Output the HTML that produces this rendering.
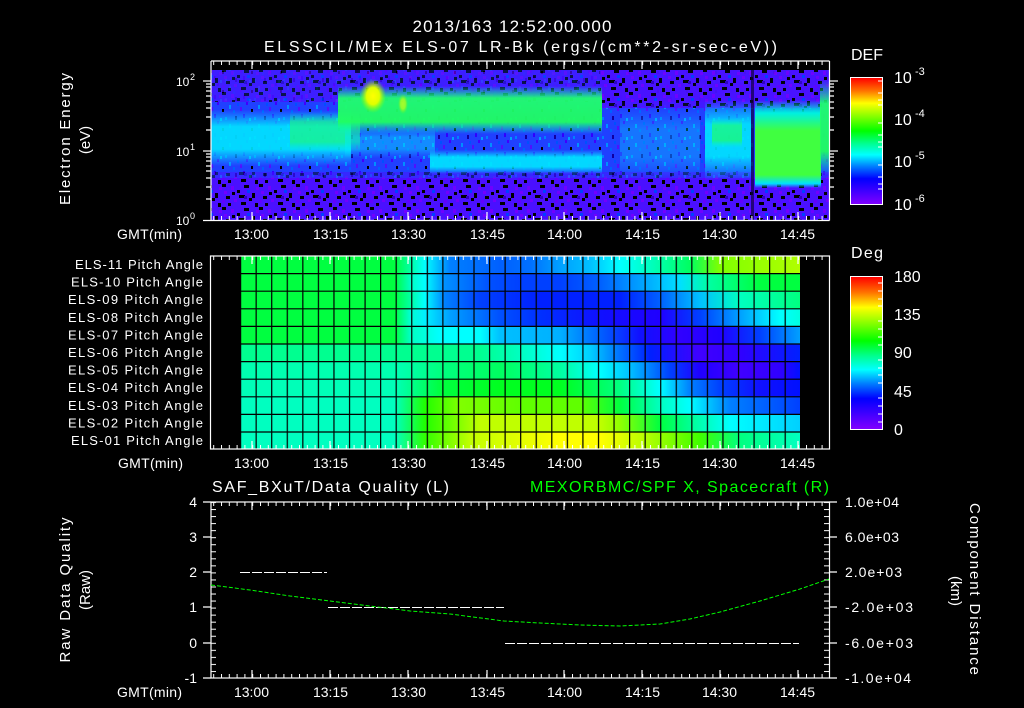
<!DOCTYPE html>
<html><head><meta charset="utf-8">
<style>
html,body{margin:0;padding:0;background:#000;width:1024px;height:708px;overflow:hidden;position:relative}
.pa{position:absolute;left:240px;width:560px;height:17.6px}
.cb{position:absolute;left:850px;width:33px;background:linear-gradient(to bottom,#ff0000 0%,#ff7000 10%,#ffff00 20%,#80ff00 31%,#00ff00 42%,#00ff90 52%,#00ffff 61%,#0080ff 70%,#0000ff 80%,#4000ff 90%,#8000ff 100%);box-sizing:border-box;border:1px solid #fff}
svg{position:absolute;left:0;top:0}
text{font-family:"Liberation Sans",sans-serif;fill:#fff}
</style></head><body>
<div class="pa" style="top:256px;background:linear-gradient(to right,#00ff40 0px,#00ff40 155px,#00ffff 185px,#0080ff 210px,#0060ff 260px,#0070ff 290px,#00a0ff 320px,#00c0ff 350px,#00ffff 380px,#00ffc0 410px,#00ff60 450px,#80ff00 480px,#b0ff00 560px)"></div>
<div class="pa" style="top:273.6px;background:linear-gradient(to right,#00ff40 0px,#00ff40 155px,#00ffc0 170px,#00ffff 185px,#0090ff 205px,#0050ff 250px,#0040ff 280px,#0040ff 320px,#0060ff 360px,#00a0ff 400px,#00e0ff 440px,#00ffa0 470px,#00ff40 520px,#00ff40 560px)"></div>
<div class="pa" style="top:291.2px;background:linear-gradient(to right,#00ff40 0px,#00ff40 155px,#00ffff 185px,#0080ff 205px,#0040ff 240px,#0020ff 300px,#0020ff 380px,#0060ff 420px,#00c0ff 460px,#00ffc0 500px,#00ff80 560px)"></div>
<div class="pa" style="top:308.8px;background:linear-gradient(to right,#00ff40 0px,#00ff40 155px,#00ffd0 170px,#00f0ff 185px,#00a0ff 210px,#0050ff 260px,#0030ff 300px,#1010ff 360px,#2000ff 420px,#0040ff 460px,#00a0ff 500px,#00ffff 540px,#00ffe0 560px)"></div>
<div class="pa" style="top:326.4px;background:linear-gradient(to right,#00ff40 0px,#00ff40 155px,#00ffc0 170px,#00ffff 200px,#00ffff 240px,#00c0ff 260px,#00b0ff 320px,#0060ff 360px,#1010ff 400px,#3000ff 440px,#2000ff 480px,#0040ff 520px,#00a0ff 560px)"></div>
<div class="pa" style="top:344px;background:linear-gradient(to right,#00ff90 0px,#00ff90 240px,#00ffc0 280px,#00ffff 320px,#00d0ff 350px,#0070ff 380px,#0020ff 410px,#4000ff 460px,#3000ff 500px,#0020ff 560px)"></div>
<div class="pa" style="top:361.6px;background:linear-gradient(to right,#00ffb0 0px,#00ffb0 160px,#00ff80 200px,#00ff60 260px,#00ffa0 320px,#00ffff 360px,#00c0ff 390px,#0040ff 430px,#2000ff 460px,#4000ff 500px,#3000ff 540px,#0010ff 560px)"></div>
<div class="pa" style="top:379.2px;background:linear-gradient(to right,#00ffb8 0px,#00ffb8 155px,#00ff40 200px,#00ff20 260px,#00ff20 320px,#00ff80 380px,#00ffff 420px,#0080ff 450px,#0040ff 480px,#1010ff 520px,#0010ff 560px)"></div>
<div class="pa" style="top:396.8px;background:linear-gradient(to right,#00ffc0 0px,#00ffc0 155px,#20ff00 185px,#80ff00 220px,#60ff00 280px,#60ff00 340px,#00ff40 380px,#00ffc0 420px,#00ffff 450px,#0080ff 490px,#0040ff 560px)"></div>
<div class="pa" style="top:414.4px;background:linear-gradient(to right,#00ffc0 0px,#00ffc0 155px,#20ff00 185px,#c0ff00 240px,#c0ff00 360px,#90ff00 380px,#00ff40 420px,#00ffb0 460px,#00ffff 490px,#00d0ff 560px)"></div>
<div class="pa" style="top:432px;height:17px;background:linear-gradient(to right,#00ffc0 0px,#00ffc0 155px,#30ff00 185px,#c0ff00 230px,#ffff00 320px,#ffff00 360px,#c0ff00 400px,#40ff00 460px,#00ff80 500px,#00ffc0 560px)"></div>
<div class="cb" style="top:77px;height:128px"></div>
<div class="cb" style="top:276px;height:154px"></div>

<svg width="1024" height="708" viewBox="0 0 1024 708">
<defs>
<clipPath id="cd"><rect x="211" y="70" width="618" height="150"/></clipPath>
<linearGradient id="gc" x1="0" y1="0" x2="0" y2="1"><stop offset="0" stop-color="#00e8ff" stop-opacity="0"/><stop offset="0.3" stop-color="#00e8ff" stop-opacity="0.9"/><stop offset="0.7" stop-color="#00e8ff" stop-opacity="0.9"/><stop offset="1" stop-color="#00e8ff" stop-opacity="0"/></linearGradient>
<linearGradient id="gg" x1="0" y1="0" x2="0" y2="1"><stop offset="0" stop-color="#00ffb0" stop-opacity="0"/><stop offset="0.25" stop-color="#20ff70" stop-opacity="0.95"/><stop offset="0.75" stop-color="#20ff60" stop-opacity="0.95"/><stop offset="1" stop-color="#00ffc0" stop-opacity="0"/></linearGradient>
<linearGradient id="gb" x1="0" y1="0" x2="0" y2="1"><stop offset="0" stop-color="#00ffd0" stop-opacity="0"/><stop offset="0.15" stop-color="#00f0e0"/><stop offset="0.35" stop-color="#40ff40"/><stop offset="0.85" stop-color="#40ff40"/><stop offset="0.95" stop-color="#00e0ff"/><stop offset="1" stop-color="#00e0ff" stop-opacity="0"/></linearGradient>
<radialGradient id="gy"><stop offset="0" stop-color="#ffff00"/><stop offset="0.5" stop-color="#e0ff00"/><stop offset="1" stop-color="#80ff00" stop-opacity="0"/></radialGradient>
<pattern id="nz" width="37" height="23" patternUnits="userSpaceOnUse">
<rect width="37" height="23" fill="#4a10ff"/>
<rect x="0" y="0" width="4" height="3" fill="#000"/><rect x="9" y="2" width="3" height="4" fill="#7000ff"/>
<rect x="15" y="6" width="3" height="3" fill="#000"/><rect x="22" y="1" width="5" height="3" fill="#000"/>
<rect x="30" y="9" width="3" height="5" fill="#000"/><rect x="4" y="12" width="4" height="3" fill="#000"/>
<rect x="12" y="15" width="3" height="3" fill="#7000ff"/><rect x="19" y="18" width="5" height="3" fill="#000"/>
<rect x="27" y="14" width="3" height="3" fill="#000"/><rect x="33" y="19" width="3" height="4" fill="#000"/>
<rect x="6" y="19" width="3" height="3" fill="#000"/><rect x="25" y="6" width="3" height="3" fill="#0040ff"/>
<rect x="2" y="7" width="3" height="3" fill="#7000ff"/><rect x="17" y="11" width="6" height="3" fill="#000"/>
<rect x="34" y="3" width="3" height="3" fill="#7000ff"/><rect x="10" y="8" width="3" height="3" fill="#000"/>
<rect x="22" y="12" width="3" height="3" fill="#3000c0"/><rect x="0" y="16" width="3" height="3" fill="#6000ff"/>
</pattern>
<pattern id="nz2" width="29" height="19" patternUnits="userSpaceOnUse">
<rect width="29" height="19" fill="#2040ff"/>
<rect x="3" y="2" width="2" height="4" fill="#1000a0"/><rect x="14" y="7" width="2" height="3" fill="#4000ff"/>
<rect x="22" y="3" width="2" height="3" fill="#0080ff"/><rect x="8" y="12" width="2" height="4" fill="#5010ff"/>
<rect x="19" y="14" width="2" height="3" fill="#000"/><rect x="26" y="10" width="2" height="4" fill="#0090ff"/>
<rect x="1" y="15" width="2" height="3" fill="#0060ff"/><rect x="11" y="0" width="2" height="4" fill="#3000ff"/>
<rect x="17" y="4" width="2" height="3" fill="#00a0ff"/><rect x="5" y="8" width="2" height="3" fill="#0050ff"/>
</pattern>
<pattern id="tx" x="213.2" width="7.8" height="1" patternUnits="userSpaceOnUse"><rect width="1" height="1" fill="#fff"/></pattern>
<pattern id="ty" y="502" width="1" height="7.04" patternUnits="userSpaceOnUse"><rect width="1" height="1" fill="#fff"/></pattern>
<pattern id="gv" x="240" width="15.56" height="1" patternUnits="userSpaceOnUse"><rect width="1.2" height="1" fill="#000"/></pattern>
</defs>

<text x="512" y="32" font-size="17" text-anchor="middle" textLength="199">2013/163 12:52:00.000</text>
<text x="264" y="52" font-size="16" textLength="513">ELSSCIL/MEx ELS-07 LR-Bk  (ergs/(cm**2-sr-sec-eV))</text>

<g clip-path="url(#cd)">
<rect x="211" y="70" width="618" height="150" fill="url(#nz2)"/>
<rect x="211" y="70" width="618" height="32" fill="url(#nz)" opacity="0.7"/>
<rect x="600" y="70" width="229" height="38" fill="url(#nz)" opacity="0.85"/>
<rect x="211" y="178" width="618" height="42" fill="url(#nz)"/>
<rect x="211" y="172" width="618" height="8" fill="url(#nz)" opacity="0.5"/>
<rect x="211" y="110" width="140" height="56" fill="url(#gc)"/>
<rect x="290" y="112" width="70" height="40" fill="url(#gg)" opacity="0.6"/>
<rect x="338" y="86" width="264" height="48" fill="url(#gg)"/>
<rect x="430" y="150" width="172" height="24" fill="url(#gc)"/>
<rect x="345" y="128" width="90" height="30" fill="url(#gc)" opacity="0.5"/>
<rect x="620" y="108" width="80" height="70" fill="url(#gc)" opacity="0.35"/>
<rect x="705" y="100" width="46" height="80" fill="url(#gc)"/>
<rect x="712" y="118" width="30" height="30" fill="url(#gg)" opacity="0.7"/>
<rect x="755" y="100" width="66" height="88" fill="url(#gb)"/>
<rect x="820" y="80" width="9" height="95" fill="url(#gg)"/>
<ellipse cx="373" cy="96" rx="13" ry="17" fill="url(#gy)"/>
<ellipse cx="403" cy="104" rx="5" ry="10" fill="url(#gy)" opacity="0.6"/>
<rect x="751" y="70" width="3" height="150" fill="#100040" opacity="0.7"/>
</g>

<g stroke="#fff" stroke-width="1.2" fill="none">
<line x1="211" y1="61" x2="829.5" y2="61"/><line x1="211" y1="61" x2="211" y2="220.5"/>
<line x1="829.5" y1="61" x2="829.5" y2="220.5"/><line x1="203" y1="220.5" x2="829.5" y2="220.5"/>
<line x1="203" y1="81" x2="211" y2="81"/><line x1="203" y1="151" x2="211" y2="151"/>
<line x1="829" y1="81" x2="838" y2="81"/><line x1="829" y1="151" x2="838" y2="151"/>
<path d="M206 199H211M206 187H211M206 178H211M206 171H211M206 166H211M206 161H211M206 157H211M206 154H211M206 130H211M206 117H211M206 108H211M206 102H211M206 96H211M206 91H211M206 87H211M206 84H211M829 199H834M829 187H834M829 178H834M829 171H834M829 166H834M829 161H834M829 157H834M829 154H834M829 130H834M829 117H834M829 108H834M829 102H834M829 96H834M829 91H834M829 87H834M829 84H834"/>
<path d="M252 61v8M330 61v8M408 61v8M487 61v8M564 61v8M642 61v8M720 61v8M798 61v8M252 220v-8M330 220v-8M408 220v-8M487 220v-8M564 220v-8M642 220v-8M720 220v-8M798 220v-8"/>
</g>
<rect x="211" y="61" width="618" height="4" fill="url(#tx)"/>
<rect x="211" y="216" width="618" height="4" fill="url(#tx)"/>
<g font-size="12">
<text x="176" y="86">10</text><text x="190" y="80" font-size="9">2</text>
<text x="176" y="156">10</text><text x="190" y="150" font-size="9">1</text>
<text x="176" y="225">10</text><text x="190" y="219" font-size="9">0</text>
</g>
<text transform="translate(70,139) rotate(-90)" font-size="15" text-anchor="middle" textLength="132">Electron Energy</text>
<text transform="translate(90,140) rotate(-90)" font-size="15" text-anchor="middle">(eV)</text>
<g font-size="14">
<text x="117" y="239" textLength="65">GMT(min)</text>
<text x="234" y="239" textLength="35">13:00</text><text x="313" y="239" textLength="35">13:15</text>
<text x="391" y="239" textLength="35">13:30</text><text x="470" y="239" textLength="35">13:45</text>
<text x="547" y="239" textLength="35">14:00</text><text x="625" y="239" textLength="35">14:15</text>
<text x="702" y="239" textLength="35">14:30</text><text x="780" y="239" textLength="35">14:45</text>
</g>
<text x="851" y="60" font-size="16" textLength="32">DEF</text>
<g font-size="16">
<text x="894" y="83">10</text><text x="915" y="75" font-size="11">-3</text>
<text x="894" y="125">10</text><text x="915" y="117" font-size="11">-4</text>
<text x="894" y="167">10</text><text x="915" y="159" font-size="11">-5</text>
<text x="894" y="210">10</text><text x="915" y="202" font-size="11">-6</text>
</g>
<path d="M878 81h5M878 93h5M878 100h5M878 105h5M878 123h5M878 135h5M878 142h5M878 147h5M878 165h5M878 177h5M878 184h5M878 189h5" stroke="#fff"/>

<rect x="240" y="256" width="560" height="193" fill="url(#gv)"/>
<path d="M240 273.6H800M240 291.2H800M240 308.8H800M240 326.4H800M240 344H800M240 361.6H800M240 379.2H800M240 396.8H800M240 414.4H800M240 432H800" stroke="#000" stroke-width="1.2"/>
<g stroke="#fff" stroke-width="1.2" fill="none">
<rect x="210.5" y="256" width="619" height="193"/>
<path d="M252 256v8M330 256v8M408 256v8M487 256v8M564 256v8M642 256v8M720 256v8M798 256v8M252 449v-8M330 449v-8M408 449v-8M487 449v-8M564 449v-8M642 449v-8M720 449v-8M798 449v-8"/>
</g>
<rect x="211" y="256" width="618" height="4" fill="url(#tx)"/>
<rect x="211" y="445" width="618" height="4" fill="url(#tx)"/>
<g font-size="13" text-anchor="end">
<text x="203" y="269" textLength="128">ELS-11 Pitch Angle</text>
<text x="203" y="286.6" textLength="132">ELS-10 Pitch Angle</text>
<text x="203" y="304.2" textLength="135">ELS-09 Pitch Angle</text>
<text x="203" y="321.8" textLength="135">ELS-08 Pitch Angle</text>
<text x="203" y="339.4" textLength="135">ELS-07 Pitch Angle</text>
<text x="203" y="357" textLength="135">ELS-06 Pitch Angle</text>
<text x="203" y="374.6" textLength="135">ELS-05 Pitch Angle</text>
<text x="203" y="392.2" textLength="135">ELS-04 Pitch Angle</text>
<text x="203" y="409.8" textLength="135">ELS-03 Pitch Angle</text>
<text x="203" y="427.4" textLength="135">ELS-02 Pitch Angle</text>
<text x="203" y="445" textLength="132">ELS-01 Pitch Angle</text>
</g>
<g font-size="14">
<text x="118" y="468" textLength="65">GMT(min)</text>
<text x="234" y="468" textLength="35">13:00</text><text x="313" y="468" textLength="35">13:15</text>
<text x="391" y="468" textLength="35">13:30</text><text x="470" y="468" textLength="35">13:45</text>
<text x="547" y="468" textLength="35">14:00</text><text x="625" y="468" textLength="35">14:15</text>
<text x="702" y="468" textLength="35">14:30</text><text x="780" y="468" textLength="35">14:45</text>
</g>
<text x="851" y="258" font-size="16" textLength="32">Deg</text>
<g font-size="16">
<text x="894" y="282">180</text><text x="894" y="320">135</text><text x="894" y="358">90</text>
<text x="894" y="397">45</text><text x="894" y="435">0</text>
</g>
<path d="M878 283h5M878 291h5M878 299h5M878 306h5M878 321h5M878 329h5M878 337h5M878 345h5M878 360h5M878 368h5M878 375h5M878 383h5M878 398h5M878 406h5M878 414h5M878 422h5" stroke="#fff"/>

<text x="212" y="492" font-size="16" textLength="237">SAF_BXuT/Data Quality (L)</text>
<text x="530" y="492" font-size="16" textLength="299" style="fill:#00ff00">MEXORBMC/SPF X, Spacecraft (R)</text>
<g stroke="#fff" stroke-width="1.2" fill="none">
<rect x="211" y="502" width="618.5" height="176"/>
<path d="M203 502h8M203 537h8M203 572h8M203 607h8M203 643h8M203 678h8M829 502h8M829 537h8M829 572h8M829 607h8M829 643h8M829 678h8"/>
<path d="M252 502v8M330 502v8M408 502v8M487 502v8M564 502v8M642 502v8M720 502v8M798 502v8M252 678v-8M330 678v-8M408 678v-8M487 678v-8M564 678v-8M642 678v-8M720 678v-8M798 678v-8"/>
</g>
<rect x="211" y="502" width="618" height="4" fill="url(#tx)"/>
<rect x="211" y="674" width="618" height="4" fill="url(#tx)"/>
<rect x="211" y="502" width="5" height="176" fill="url(#ty)"/>
<rect x="824" y="502" width="5" height="176" fill="url(#ty)"/>
<g fill="none" stroke="#fff" stroke-width="1" stroke-dasharray="10 2">
<line x1="240" y1="572.5" x2="327" y2="572.5"/>
<line x1="328" y1="607.5" x2="504" y2="607.5"/>
<line x1="505" y1="643.5" x2="799" y2="643.5"/>
</g>
<polyline points="211,585 250,590 290,596 330,601 370,606 410,611 450,614 504,621 540,623 580,625 620,626 660,624 690,619 720,612 760,601 800,589 829,579" fill="none" stroke="#00ff00" stroke-width="1" stroke-dasharray="4 2"/>
<g font-size="14" text-anchor="end">
<text x="197" y="507">4</text><text x="197" y="542">3</text><text x="197" y="577">2</text>
<text x="197" y="612">1</text><text x="197" y="648">0</text><text x="197" y="683">-1</text>
</g>
<g font-size="14">
<text x="845" y="507" textLength="54">1.0e+04</text>
<text x="845" y="542" textLength="54">6.0e+03</text>
<text x="845" y="577" textLength="57">2.0e+03</text>
<text x="845" y="612" textLength="68">-2.0e+03</text>
<text x="845" y="648" textLength="68">-6.0e+03</text>
<text x="845" y="683" textLength="66">-1.0e+04</text>
</g>
<text transform="translate(70,590) rotate(-90)" font-size="15" text-anchor="middle" textLength="145">Raw Data Quality</text>
<text transform="translate(90,590) rotate(-90)" font-size="15" text-anchor="middle">(Raw)</text>
<text transform="translate(970,589) rotate(90)" font-size="15" text-anchor="middle" textLength="172">Component Distance</text>
<text transform="translate(951,591) rotate(90)" font-size="15" text-anchor="middle">(km)</text>
<g font-size="14">
<text x="117" y="697" textLength="65">GMT(min)</text>
<text x="234" y="697" textLength="35">13:00</text><text x="313" y="697" textLength="35">13:15</text>
<text x="391" y="697" textLength="35">13:30</text><text x="470" y="697" textLength="35">13:45</text>
<text x="547" y="697" textLength="35">14:00</text><text x="625" y="697" textLength="35">14:15</text>
<text x="702" y="697" textLength="35">14:30</text><text x="780" y="697" textLength="35">14:45</text>
</g>
</svg>
</body></html>
